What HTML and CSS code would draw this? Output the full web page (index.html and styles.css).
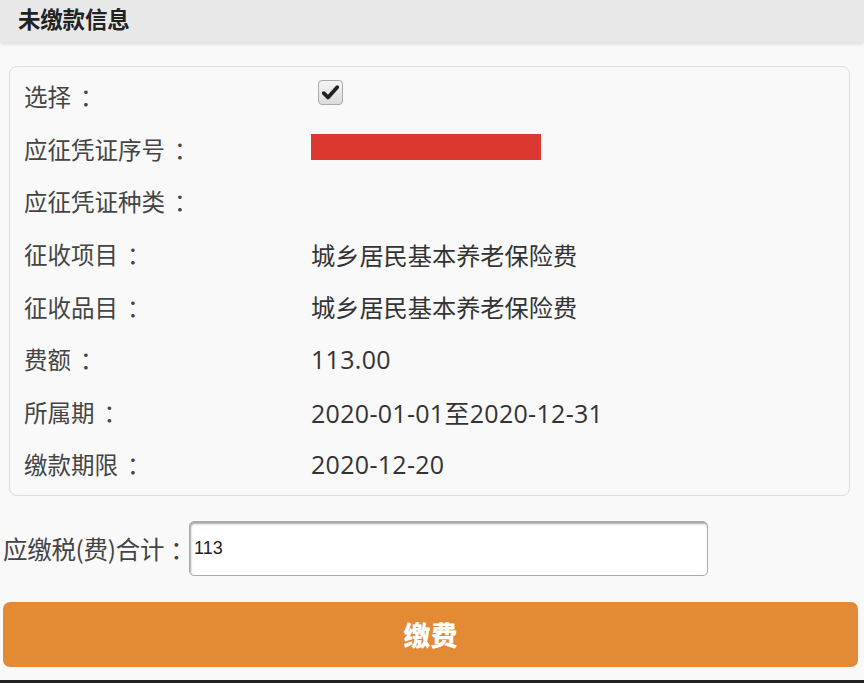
FILE: index.html
```html
<!DOCTYPE html>
<html lang="zh-CN">
<head>
<meta charset="utf-8">
<link rel="stylesheet" href="styles.css">
</head>
<body>
<div class="page">
  <header class="header"><h1 class="title">未缴款信息</h1></header>
  <section class="card">
    <div class="row"><span class="label">选择<span class="colon">：</span></span><span class="value"><span class="check"><svg width="17" height="15" viewBox="0 0 17 15"><path d="M1.8 8.2 L6 12.5 L15.2 2.2" fill="none" stroke="#222" stroke-width="3.8" stroke-linecap="round" stroke-linejoin="round"/></svg></span></span></div>
    <div class="row"><span class="label">应征凭证序号<span class="colon">：</span></span><span class="value"><span class="redact"></span></span></div>
    <div class="row"><span class="label">应征凭证种类<span class="colon">：</span></span><span class="value"></span></div>
    <div class="row"><span class="label">征收项目<span class="colon">：</span></span><span class="value">城乡居民基本养老保险费</span></div>
    <div class="row"><span class="label">征收品目<span class="colon">：</span></span><span class="value">城乡居民基本养老保险费</span></div>
    <div class="row"><span class="label">费额<span class="colon">：</span></span><span class="value num">113.00</span></div>
    <div class="row"><span class="label">所属期<span class="colon">：</span></span><span class="value num">2020-01-01至2020-12-31</span></div>
    <div class="row"><span class="label">缴款期限<span class="colon">：</span></span><span class="value num">2020-12-20</span></div>
  </section>
  <div class="total">
    <span class="total-label">应缴税(费)合计<span class="colon">：</span></span>
    <input class="total-input" type="text" value="113">
  </div>
  <button class="pay">缴费</button>
  <div class="bottom-line"></div>
</div>
</body>
</html>
```
FILE: styles.css
```css
* { box-sizing: border-box; }
html, body { margin: 0; padding: 0; }
body {
  background: #f9f9f9;
  font-family: "Noto Sans CJK SC", "Noto Sans", sans-serif;
  color: #333;
  width: 864px;
  height: 683px;
  overflow: hidden;
}
.page { display: flex; flex-direction: column; height: 683px; }
.header {
  height: 42px;
  background: #e8e8e8;
  box-shadow: 0 2px 4px rgba(0,0,0,0.12);
  display: flex;
  align-items: center;
  padding-left: 18px;
}
.title {
  margin: 0;
  font-size: 22.5px;
  font-weight: 700;
  color: #222;
  letter-spacing: -0.2px;
  line-height: 1;
  margin-top: -6px;
}
.colon { margin-left: 9px; }
.card {
  margin: 24px 14px 0 9px;
  border: 1px solid #ddd;
  border-radius: 8px;
  padding: 3px 0 4px 14px;
  display: flex;
  flex-direction: column;
}
.row {
  height: 52.6px;
  display: flex;
  align-items: center;
  font-size: 23.5px;
  color: #444;
}
.label { width: 287px; flex: none; white-space: nowrap; }
.value { font-size: 24.2px; display: flex; align-items: center; color: #333; }
.num { font-family: "Open Sans", "Noto Sans CJK SC", sans-serif; font-size: 25px; letter-spacing: 0.3px; }
.check {
  margin-left: 7px;
  width: 25px;
  height: 25px;
  border: 1px solid #aaa;
  border-radius: 4px;
  background: linear-gradient(#f4f4f4, #dcdcdc);
  display: flex;
  align-items: center;
  justify-content: center;
  margin-top: -8px;
}
.redact {
  width: 230px;
  height: 26px;
  background: #dc3731;
  margin-top: -4px;
}
.total {
  margin-top: 25px;
  display: flex;
  align-items: center;
  padding-left: 3px;
}
.total-label { font-size: 24.5px; color: #444; width: 186px; flex: none; letter-spacing: -0.3px; white-space: nowrap; }
.total-label .colon { margin-left: 6px; margin-right: -16px; }
.total-input {
  width: 519px;
  height: 55px;
  border: 1px solid #aaa;
  border-radius: 5px;
  background: #fff;
  box-shadow: inset 1px 2px 2px rgba(0,0,0,0.35);
  font-family: "Liberation Sans", Arial, sans-serif;
  font-size: 18px;
  color: #222;
  padding: 0 4px;
}
.pay {
  margin: 26px 6px 0 3px;
  height: 65px;
  border: none;
  border-radius: 7px;
  background: #e38a35;
  color: #fff;
  font-family: "Noto Sans CJK SC", sans-serif;
  font-size: 27px;
  font-weight: 900;
  padding: 0;
}
.bottom-line {
  margin-top: auto;
  height: 3px;
  background: #222;
}
```
